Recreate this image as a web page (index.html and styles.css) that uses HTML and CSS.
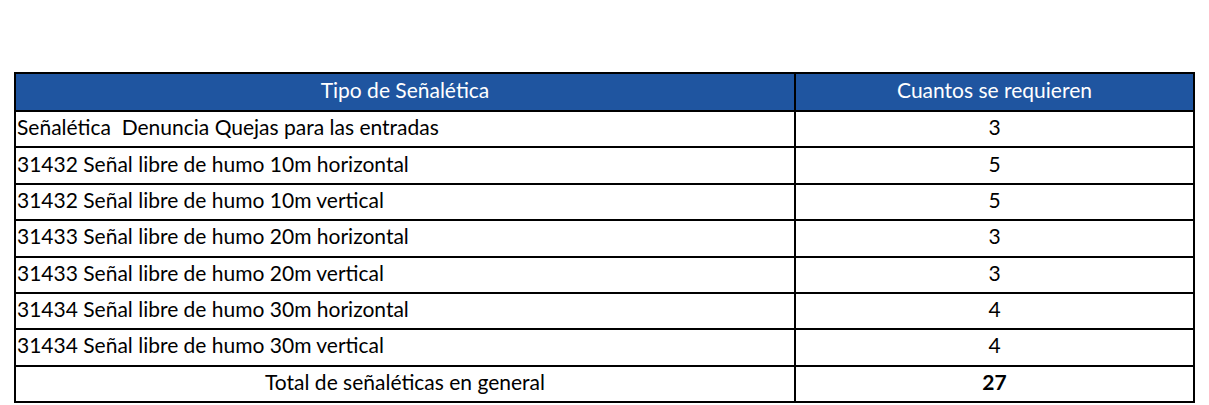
FILE: index.html
```html
<!DOCTYPE html>
<html lang="es">
<head>
<meta charset="utf-8">
<title>Señalética</title>
<link rel="stylesheet" href="styles.css">
</head>
<body>
<table class="sheet">
  <thead>
    <tr>
      <th class="col-type">Tipo de Señalética</th>
      <th class="col-qty">Cuantos se requieren</th>
    </tr>
  </thead>
  <tbody>
    <tr><td class="name">Señalética&nbsp; Denuncia Quejas para las entradas</td><td class="qty">3</td></tr>
    <tr><td class="name">31432 Señal libre de humo 10m horizontal</td><td class="qty">5</td></tr>
    <tr><td class="name">31432 Señal libre de humo 10m vertical</td><td class="qty">5</td></tr>
    <tr><td class="name">31433 Señal libre de humo 20m horizontal</td><td class="qty">3</td></tr>
    <tr><td class="name">31433 Señal libre de humo 20m vertical</td><td class="qty">3</td></tr>
    <tr><td class="name">31434 Señal libre de humo 30m horizontal</td><td class="qty">4</td></tr>
    <tr><td class="name">31434 Señal libre de humo 30m vertical</td><td class="qty">4</td></tr>
    <tr class="total"><td class="total-label">Total de señaléticas en general</td><td class="qty total-value">27</td></tr>
  </tbody>
</table>
</body>
</html>
```
FILE: styles.css
```css
html, body {
  margin: 0;
  padding: 0;
  background: #ffffff;
}
body {
  padding: 72px 0 0 14px;
  font-family: "Lato", "Open Sans", sans-serif;
  font-size: 21px;
  color: #000000;
}
.sheet {
  border-collapse: collapse;
  width: 1181px;
  height: 331px;
  table-layout: fixed;
}
.sheet th, .sheet td {
  border: 2px solid #000000;
  padding: 0 1px 4px 1px;
  height: 20px;
  font-weight: normal;
  line-height: 22px;
}
.sheet th {
  background: #1f55a0;
  color: #ffffff;
  text-align: center;
  height: 32px;
}
.col-type { width: 776px; }
.col-qty { width: auto; }
.name { text-align: left; }
.qty { text-align: center; }
.total-label { text-align: center; }
.sheet .total-value { font-weight: bold; }
```
